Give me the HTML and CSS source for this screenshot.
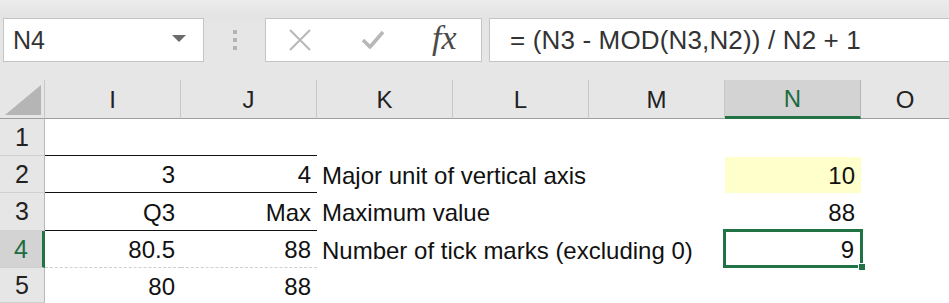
FILE: index.html
```html
<!DOCTYPE html>
<html>
<head>
<meta charset="utf-8">
<link rel="stylesheet" href="styles.css">
</head>
<body>
<div class="app">
  <div class="fbar">
    <div class="namebox">
      <span class="name">N4</span>
      <svg class="caret" width="14" height="8" viewBox="0 0 14 8"><path d="M0 0 H14 L7 7 Z" fill="#6b6b6b"/></svg>
    </div>
    <div class="grip"><span></span><span></span><span></span></div>
    <div class="btnbox">
      <svg class="ico" width="24" height="24" viewBox="0 0 24 24"><path d="M2 2 L22 22 M22 2 L2 22" stroke="#b8b8b8" stroke-width="2" fill="none"/></svg>
      <svg class="ico" width="26" height="24" viewBox="0 0 26 24"><path d="M3 12 L10 19 L23 4" stroke="#b8b8b8" stroke-width="3.6" fill="none" stroke-linejoin="round"/></svg>
      <span class="fx">fx</span>
    </div>
    <div class="formula">= (N3 - MOD(N3,N2)) / N2 + 1</div>
  </div>
  <div class="sheet">
    <div class="corner"><svg width="36" height="30" viewBox="0 0 36 30"><path d="M36 0 V30 H0 Z" fill="#b5b5b5"/></svg></div>
    <div class="ch">I</div>
    <div class="ch">J</div>
    <div class="ch">K</div>
    <div class="ch">L</div>
    <div class="ch">M</div>
    <div class="ch sel">N</div>
    <div class="ch last">O</div>

    <div class="rh">1</div>
    <div class="c bb"></div><div class="c bb"></div><div class="c"></div><div class="c"></div><div class="c"></div><div class="c"></div><div class="c"></div>

    <div class="rh">2</div>
    <div class="c num bb">3</div><div class="c num bb">4</div><div class="c txt">Major unit of vertical axis</div><div class="c"></div><div class="c"></div><div class="c num yellow">10</div><div class="c"></div>

    <div class="rh">3</div>
    <div class="c num bb">Q3</div><div class="c num bb">Max</div><div class="c txt">Maximum value</div><div class="c"></div><div class="c"></div><div class="c num">88</div><div class="c"></div>

    <div class="rh sel">4</div>
    <div class="c num dash">80.5</div><div class="c num dash">88</div><div class="c txt">Number of tick marks (excluding 0)</div><div class="c"></div><div class="c"></div><div class="c num active">9<span class="handle"></span></div><div class="c"></div>

    <div class="rh">5</div>
    <div class="c num">80</div><div class="c num">88</div><div class="c"></div><div class="c"></div><div class="c"></div><div class="c"></div><div class="c"></div>
  </div>
</div>
</body>
</html>
```
FILE: styles.css
```css
* { box-sizing: border-box; }
html, body { margin: 0; padding: 0; }
body {
  width: 949px;
  height: 303px;
  overflow: hidden;
  background: #e6e6e6;
  font-family: "Liberation Sans", Arial, sans-serif;
  color: #1a1a1a;
}
.app { display: flex; flex-direction: column; }
.fbar {
  height: 80px;
  display: flex;
  align-items: flex-start;
  padding-top: 18px;
  padding-left: 3px;
  background: linear-gradient(#ececec 0px, #e4e4e4 16px, #e6e6e6 30px);
}
.namebox {
  width: 201px;
  height: 44px;
  background: #fff;
  border: 1px solid #c4c4c4;
  display: flex;
  align-items: center;
  justify-content: space-between;
  padding: 0 17px 0 9px;
}
.name { font-size: 25px; color: #333; }
.caret { margin-top: -2px; }
.grip {
  width: 61px;
  height: 44px;
  display: flex;
  flex-direction: column;
  align-items: center;
  justify-content: center;
  gap: 4px;
}
.grip span { width: 4px; height: 4px; background: #b4b4b4; }
.btnbox {
  width: 217px;
  height: 44px;
  background: #fff;
  border: 1px solid #c4c4c4;
  display: flex;
  align-items: center;
  padding-left: 22px;
}
.btnbox .ico:nth-child(1) { margin-right: 48px; }
.btnbox .ico:nth-child(2) { margin-right: 46px; }
.fx {
  font-family: "Liberation Serif", "Times New Roman", serif;
  font-style: italic;
  font-size: 34px;
  color: #4a4a4a;
  margin-top: -4px;
}
.formula {
  margin-left: 7px;
  flex: 1;
  height: 44px;
  background: #fff;
  border: 1px solid #c4c4c4;
  border-right: none;
  display: flex;
  align-items: center;
  padding-left: 20px;
  font-size: 26px;
  letter-spacing: 0.15px;
  color: #333;
  white-space: nowrap;
}
.sheet {
  display: grid;
  grid-template-columns: 45px repeat(6, 136px) 1fr;
  grid-template-rows: 39px 37px 37px 38px 37px 35px;
  background: #fff;
}
.corner {
  background: #e6e6e6;
  border-right: 1px solid #c8c8c8;
  border-bottom: 1px solid #9e9e9e;
  display: flex;
  align-items: flex-end;
  justify-content: flex-end;
  padding: 0 3px 3px 0;
}
.ch {
  background: #e6e6e6;
  border-right: 1px solid #c8c8c8;
  border-bottom: 1px solid #9e9e9e;
  display: flex;
  align-items: center;
  justify-content: center;
  font-size: 24px;
  color: #222;
  padding-top: 2px;
}
.ch.last { border-right: none; }
.ch.sel {
  background: #d3d3d3;
  color: #1e6b3e;
  border-bottom: 3px solid #217346;
  border-right: 1px solid #b5b5b5;
}
.rh {
  background: #e6e6e6;
  border-right: 1px solid #b8b8b8;
  border-bottom: 1px solid #d0d0d0;
  display: flex;
  align-items: center;
  justify-content: center;
  font-size: 25px;
  color: #222;
}
.rh.sel {
  background: #d3d3d3;
  color: #1e6b3e;
  border-right: 3px solid #217346;
}
.c {
  position: relative;
  display: flex;
  align-items: center;
  font-size: 24px;
  color: #111;
  white-space: nowrap;
  padding-top: 2px;
}
.num { justify-content: flex-end; padding-right: 6px; }
.txt { padding-left: 5px; overflow: visible; }
.bb { border-bottom: 1.5px solid #111; }
.dash { border-bottom: 1px dashed #cfcfcf; }
.yellow { background: #ffffcc; margin-top: 1px; }
.active {
  margin: -2px -2px 0 -2px;
  border: 3px solid #217346;
  padding-right: 6px;
}
.handle {
  position: absolute;
  right: -6px;
  bottom: -6px;
  width: 8px;
  height: 8px;
  background: #217346;
  border: 1px solid #fff;
}
```
